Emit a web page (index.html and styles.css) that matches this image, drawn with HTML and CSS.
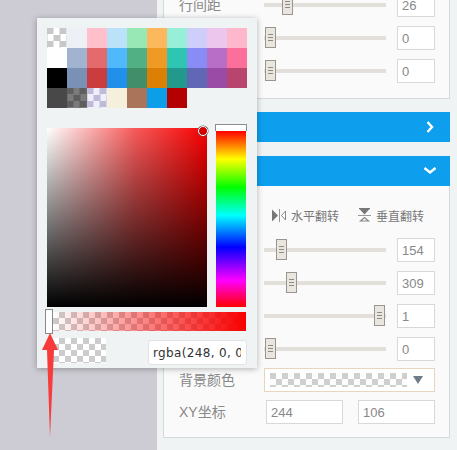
FILE: index.html
```html
<!DOCTYPE html>
<html lang="zh">
<head>
<meta charset="utf-8">
<title>属性面板</title>
<link rel="stylesheet" href="styles.css">
</head>
<body>
<div class="app">
  <div class="backdrop"></div>
  <div class="panel">
    <section class="card card-top">
      <div class="row"><span class="label">行间距</span><div class="slider"><i class="thumb" style="left:18px"><b></b></i></div><input class="num" value="26"></div>
      <div class="row"><span class="label"></span><div class="slider"><i class="thumb" style="left:1px"><b></b></i></div><input class="num" value="0"></div>
      <div class="row"><span class="label"></span><div class="slider"><i class="thumb" style="left:1px"><b></b></i></div><input class="num" value="0"></div>
    </section>
    <div class="bar bar-first">
      <svg class="chev" width="12" height="12" viewBox="0 0 12 12"><path d="M3.500 1 8 6l-4.500 5" fill="none" stroke="#fff" stroke-width="2.400"/></svg>
    </div>
    <div class="bar bar-second">
      <svg class="chev" width="12" height="12" viewBox="0 0 12 12"><path d="M.5 3 6 7.500 11.500 3" fill="none" stroke="#fff" stroke-width="2.400"/></svg>
    </div>
    <section class="card card-main">
      <div class="flips">
        <span class="flip flip-h">
          <svg width="14" height="13" viewBox="0 0 14 13"><path d="M0 .5v12l6-6z" fill="#777"/><path d="M7.500 0v13" stroke="#999" stroke-width="1"/><path d="M13.500 2v9L9.500 6.500z" fill="none" stroke="#888"/></svg>
          水平翻转
        </span>
        <span class="flip flip-v">
          <svg width="13" height="14" viewBox="0 0 13 14"><path d="M1 0h11v1.200H1z" fill="#777"/><path d="M1.500 1h10L6.500 6.500z" fill="#777"/><path d="M0 7.500h13" stroke="#999"/><path d="M2.500 13h8L6.500 9.500z" fill="none" stroke="#888" stroke-width="1.200"/></svg>
          垂直翻转
        </span>
      </div>
      <div class="row"><span class="label"></span><div class="slider"><i class="thumb" style="left:12px"><b></b></i></div><input class="num" value="154"></div>
      <div class="row"><span class="label"></span><div class="slider"><i class="thumb" style="left:22px"><b></b></i></div><input class="num" value="309"></div>
      <div class="row"><span class="label"></span><div class="slider"><i class="thumb" style="left:110px"><b></b></i></div><input class="num" value="1"></div>
      <div class="row"><span class="label"></span><div class="slider"><i class="thumb" style="left:1px"><b></b></i></div><input class="num" value="0"></div>
      <div class="row row-color"><span class="label">背景颜色</span>
        <div class="select"><span class="select-check"></span><span class="caret"></span></div>
      </div>
      <div class="row row-xy"><span class="label">XY坐标</span><input class="num xy" value="244"><input class="num xy" value="106"></div>
    </section>
  </div>

  <div class="picker">
    <div class="swatches">
      <i class="check"></i><i class="c1"></i><i class="c2"></i><i class="c3"></i><i class="c4"></i><i class="c5"></i><i class="c6"></i><i class="c7"></i><i class="c8"></i><i class="c9"></i>
      <i class="c10"></i><i class="c11"></i><i class="c12"></i><i class="c13"></i><i class="c14"></i><i class="c15"></i><i class="c16"></i><i class="c17"></i><i class="c18"></i><i class="c19"></i>
      <i class="c20"></i><i class="c21"></i><i class="c22"></i><i class="c23"></i><i class="c24"></i><i class="c25"></i><i class="c26"></i><i class="c27"></i><i class="c28"></i><i class="c29"></i>
      <i class="c30"></i><i class="check-dark"></i><i class="check-light"></i><i class="c33"></i><i class="c34"></i><i class="c35"></i><i class="c36"></i>
    </div>
    <div class="pick-main">
      <div class="sv"><span class="cursor"></span></div>
      <div class="hue"><span class="hue-handle"></span><span class="hue-strip"></span></div>
    </div>
    <div class="alpha"><span class="alpha-thumb"></span></div>
    <div class="pick-foot">
      <div class="preview"></div>
      <input class="rgba" value="rgba(248, 0, 0, 0)">
    </div>
  </div>

  <svg class="arrow" width="20" height="106" viewBox="0 0 20 106"><path d="M10 0 18 17 14 17 10 104 7 17 2 17z" fill="#f73b3b"/></svg>
</div>
</body>
</html>
```
FILE: styles.css
```css
* { box-sizing: border-box; }
html, body { margin: 0; padding: 0; }
body { font-family: "Liberation Sans", "Noto Sans CJK SC", sans-serif; color: #888; }
.app { position: relative; display: flex; width: 457px; height: 450px; overflow: hidden; background: #eff3f4; }
.backdrop { width: 157px; flex: none; background: #cdcbd3; }
.panel { width: 300px; flex: none; padding: 0 7px 0 6px; }

.card { border: 1px solid #d6dadc; background: #fafafa; padding-left: 15px; }
.card-top { margin-top: -20px; padding-top: 12px; padding-bottom: 14px; display: flex; flex-direction: column; gap: 9px; height: 119px; }
.card-main { border-top: 0; height: 252px; padding-top: 17px; display: flex; flex-direction: column; gap: 9px; }

.bar { height: 30px; background: #0d9eee; display: flex; align-items: center; justify-content: flex-end; padding-right: 14px; }
.bar-first { margin-top: 13px; }
.bar-second { margin-top: 14px; }

.row { display: flex; align-items: center; height: 24px; flex: none; }
.label { width: 85px; flex: none; font-size: 14px; line-height: 24px; color: #888; white-space: nowrap; }
.slider { position: relative; width: 122px; height: 4px; background: #e3e0db; flex: none; }
.thumb { position: absolute; top: -9px; width: 11px; height: 21px; background: #e9e5df; border: 1px solid #9a958e; display: flex; align-items: center; justify-content: center; }
.thumb b { display: block; width: 5px; height: 7px; border-top: 1px solid #8f8a84; border-bottom: 1px solid #8f8a84; background: linear-gradient(#8f8a84, #8f8a84) center / 100% 1px no-repeat; }
.num { width: 38px; height: 24px; margin: 0 0 0 11px; padding: 0 4px; border: 1px solid #d8d8d8; background: #fff; font: 13px "Liberation Sans", sans-serif; color: #888; border-radius: 0; outline: 0; }

.flips { display: flex; align-items: center; height: 24px; flex: none; padding-left: 93px; margin-bottom: 2px; }
.flip { display: flex; align-items: center; gap: 5px; font-size: 12px; color: #777; white-space: nowrap; }
.flip-v { margin-left: 19px; }

.row-color { margin-top: -2px; }
.row-xy { margin-top: -1px; }
.select { width: 171px; height: 24px; border: 1px solid #e8d5bd; background: #fff; display: flex; align-items: center; padding-left: 5px; }
.select-check { width: 137px; height: 14px; background: repeating-conic-gradient(#cfcfcf 0 25%, #fdfdfd 0 50%) 6px 0 / 12px 12px; }
.caret { margin-left: 6px; width: 0; height: 0; border-left: 5px solid transparent; border-right: 5px solid transparent; border-top: 8px solid #6e7b88; }
.xy { width: 77px; margin: 0 15px 0 2px; }
.xy + .xy { margin-left: 0; margin-right: 0; }

.picker { position: absolute; left: 37px; top: 18px; width: 220px; height: 350px; padding: 10px; background: #eff3f4; box-shadow: 0 1px 6px rgba(0,0,0,.3); }
.swatches { display: grid; grid-template-columns: repeat(10, 20px); grid-auto-rows: 20px; }
.swatches i { display: block; }
.check { background: repeating-conic-gradient(#c8c8c8 0 25%, #fff 0 50%) 6.500px 0 / 13px 13px; }
.check-dark { background: repeating-conic-gradient(#5e5e5e 0 25%, #7b7b7b 0 50%) 6.500px 0 / 13px 13px; }
.check-light { background: repeating-conic-gradient(#bdbbd8 0 25%, #efeefa 0 50%) 6.500px 0 / 13px 13px; }
.c1 { background: #edf1f6; } .c2 { background: #ffc0cb; } .c3 { background: #bae3f9; } .c4 { background: #97e8b4; } .c5 { background: #fdb85e; } .c6 { background: #98efd8; } .c7 { background: #cfcdf9; } .c8 { background: #edc6ee; } .c9 { background: #fdb8cb; }
.c10 { background: #fff; } .c11 { background: #a2b3cf; } .c12 { background: #e36b6e; } .c13 { background: #50b9fb; } .c14 { background: #52b184; } .c15 { background: #ee9a25; } .c16 { background: #2ec5b2; } .c17 { background: #8a8cf5; } .c18 { background: #b86dc6; } .c19 { background: #fc6f9a; }
.c20 { background: #000; } .c21 { background: #7991b5; } .c22 { background: #c93d3f; } .c23 { background: #2090eb; } .c24 { background: #418e6b; } .c25 { background: #db7f05; } .c26 { background: #23988c; } .c27 { background: #6067b5; } .c28 { background: #9a4ba5; } .c29 { background: #b7456d; }
.c30 { background: #484848; } .c33 { background: #f4f0dc; } .c34 { background: #a9745a; } .c35 { background: #0d9ee9; } .c36 { background: #b40000; }

.pick-main { display: flex; gap: 8px; margin-top: 16px; align-items: flex-end; }
.sv { position: relative; width: 160px; height: 179px; background: linear-gradient(to top, #000, rgba(0,0,0,0)), linear-gradient(to right, #fff, #f85a5a 55%, #f80000); }
.cursor { position: absolute; right: -1px; top: -2px; width: 10px; height: 10px; border-radius: 50%; background: #d40000; border: 1.500px solid #fff; box-shadow: 0 0 0 .5px #555; }
.hue { width: 32px; height: 183px; display: flex; flex-direction: column; }
.hue-handle { display: block; flex: none; height: 7px; background: #fff; border: 1px solid #8c8c8c; border-bottom: 0; }
.hue-strip { display: block; flex: 1; margin: 0 1px; background: linear-gradient(#ff0000, #ffff00 16%, #00ff00 32%, #00ffff 48%, #0000ff 66%, #ff00ff 85%, #ff0000); }

.alpha { position: relative; margin: 5px 0 0 6px; width: 193px; height: 19px; background: linear-gradient(to right, rgba(248,0,0,0), #f80000), repeating-conic-gradient(#ccc 0 25%, #fff 0 50%) 0 0 / 12px 12px; }
.alpha-thumb { position: absolute; left: -8px; top: -3px; width: 8px; height: 25px; background: #fff; border: 1px solid #8a8a8a; }

.pick-foot { display: flex; align-items: flex-start; margin-top: 7px; }
.preview { width: 54px; height: 25px; margin-left: 6px; background: repeating-conic-gradient(#ccc 0 25%, #fff 0 50%) 0 0 / 12px 12px; }
.rgba { width: 99px; height: 25px; margin: 2px 0 0 42px; padding: 0 5px 0 4px; border: 1px solid #e2e2e2; border-radius: 3px; background: #fff; font: 12px "DejaVu Sans", sans-serif; letter-spacing: .35px; color: #333; outline: 0; }

.arrow { position: absolute; left: 40px; top: 333px; }
```
